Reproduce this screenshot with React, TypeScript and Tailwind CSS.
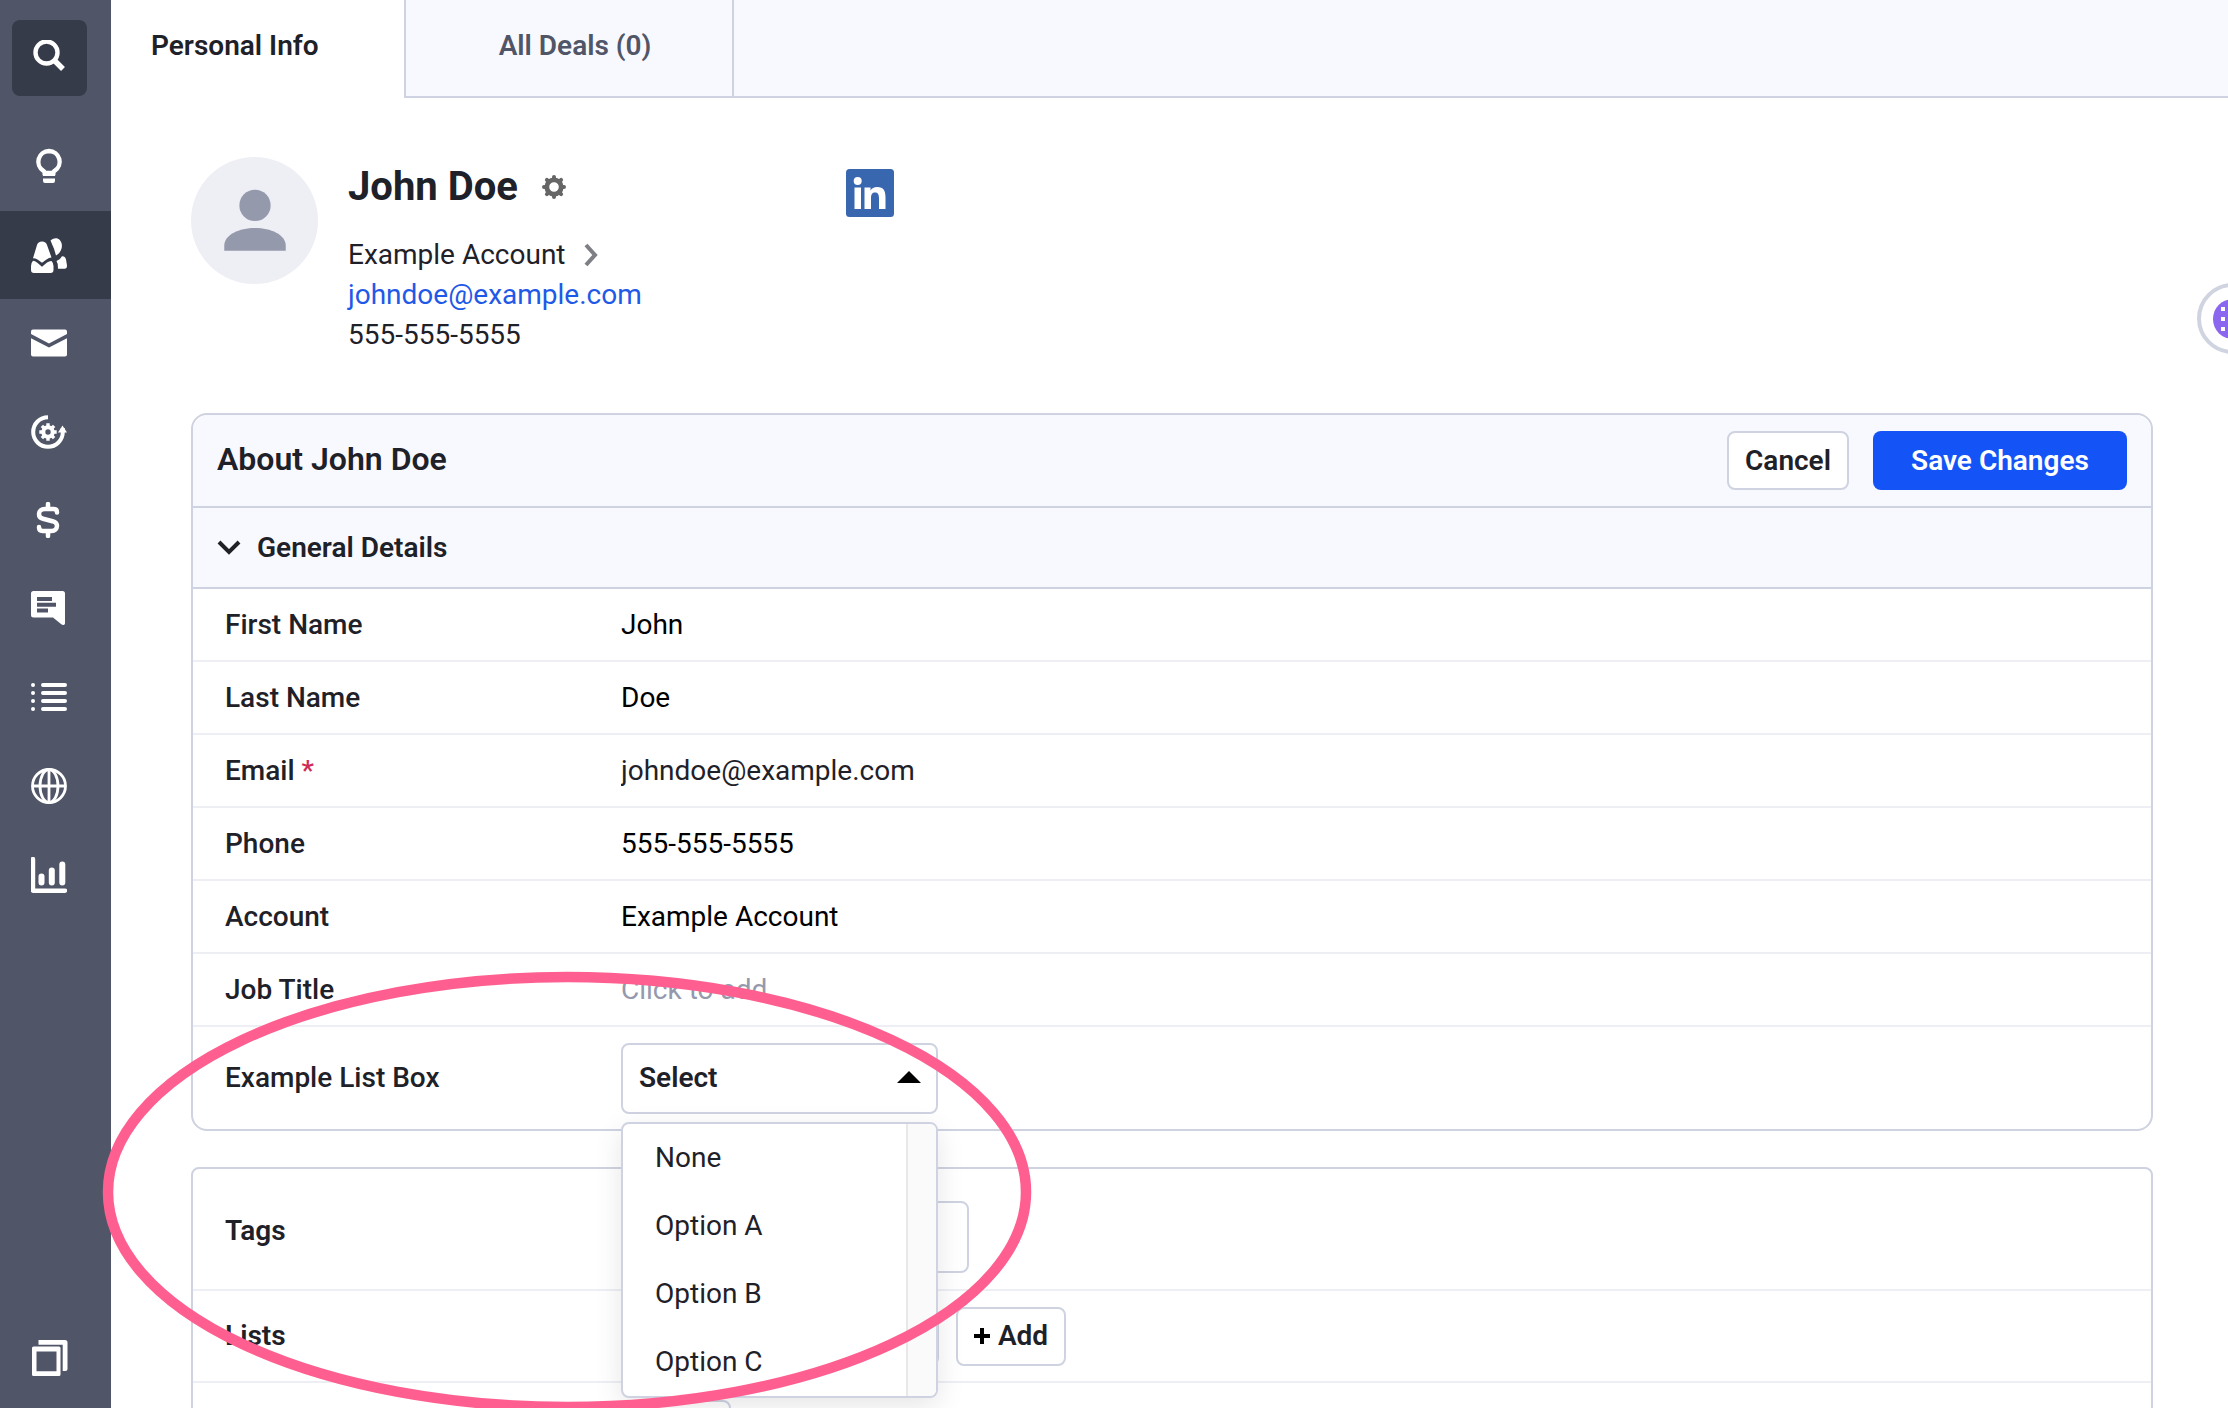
import { useState, type ReactNode } from "react";
import { clsx } from "clsx";

type Field = {
  id: string;
  label: string;
  value: string;
  required?: boolean;
  readOnly?: boolean;
};

const FIELDS: Field[] = [
  { id: "first-name", label: "First Name", value: "John" },
  { id: "last-name", label: "Last Name", value: "Doe" },
  { id: "email", label: "Email", value: "johndoe@example.com", required: true, readOnly: true },
  { id: "phone", label: "Phone", value: "555-555-5555" },
  { id: "account", label: "Account", value: "Example Account" },
  { id: "job-title", label: "Job Title", value: "" },
];

const OPTIONS = ["None", "Option A", "Option B", "Option C"];

/** Sidebar icons share a 36x36 box. */
function Icon({ children }: { children: ReactNode }) {
  return (
    <svg viewBox="0 0 36 36" className="size-9" fill="currentColor" aria-hidden="true">
      {children}
    </svg>
  );
}

const NAV: { label: string; active?: boolean; icon: ReactNode }[] = [
  {
    label: "Opportunities",
    icon: (
      <>
        <path
          d="M18 3a10.7 10.7 0 0 0-5.6 19.8c.8.6 1.3 1.2 1.3 2.2h8.6c0-1 .5-1.6 1.3-2.2A10.7 10.7 0 0 0 18 3Z"
          fill="none"
          stroke="currentColor"
          strokeWidth="4.4"
        />
        <path d="M12 24h12v4H12zM12 30.5h12v2.5a2 2 0 0 1-2 2h-8a2 2 0 0 1-2-2z" />
      </>
    ),
  },
  {
    label: "People",
    active: true,
    icon: (
      <>
        <path d="M6 8Q7 4.500 11 4.500T16 8L20.500 20.500Q18 20.700 15.500 22.500L11 25.800 6.500 22.500Q4.500 21.300 2 21.300Z" />
        <path d="M2 23.800Q4 24 6 25.500L11 29.700 16 25.500Q18.500 23.800 20.500 24 22.500 26 22.500 29V33Q22.500 36 19.500 36H3Q0 36 0 33V29Q0 26 2 23.800Z" />
        <path d="M19.500 3.500C23 .5 26.500.5 28.800 3 32.500 7 31.500 15 25 18.500Q23.500 12 19.500 3.500Z" />
        <path d="M25.500 24Q29.500 22.500 31 19.300 34 19 35 22.500L36 28.500Q36 31.800 33.500 31.800H27Q27.500 27 25.500 24Z" />
      </>
    ),
  },
  {
    label: "Mail",
    icon: (
      <>
        <path d="M2 4.500h32a2 2 0 0 1 2 2V9L18 18.500 0 9V6.500a2 2 0 0 1 2-2Z" />
        <path d="M0 13.300 18 22.500l18-9.200v16.200a2 2 0 0 1-2 2H2a2 2 0 0 1-2-2Z" />
      </>
    ),
  },
  {
    label: "Automations",
    icon: (
      <>
        <path d="M17 3.200A14.800 14.800 0 1 0 31.800 18v-4" fill="none" stroke="currentColor" strokeWidth="4" />
        <path d="M31.500 11.500 36 18.500h-9z" />
        <circle cx="17" cy="18" r="4.700" fill="none" stroke="currentColor" strokeWidth="4" />
        <g stroke="currentColor" strokeWidth="3.400">
          <path d="M17 9.300v3M17 23.700v3M8.300 18h3M22.700 18h3M10.900 11.900l2.100 2.100M21 22l2.100 2.100M10.900 24.100 13 22M21 14l2.100-2.100" />
        </g>
      </>
    ),
  },
  {
    label: "Deals",
    icon: (
      <path
        d="M17 2v5M17 29v5M26 10.500C26 8 24.500 7 22.500 7h-9C10.500 7 8 9.200 8 12c0 3 2 4.300 4 4.800l9.500 2.400c2.500.7 4.500 2 4.500 4.600 0 3-2.300 5.200-5.500 5.200h-9C9 29 8 27.500 8 25"
        fill="none"
        stroke="currentColor"
        strokeWidth="4.500"
        strokeLinecap="round"
      />
    ),
  },
  {
    label: "Conversations",
    icon: (
      <path
        fillRule="evenodd"
        d="M2.500 0h29A2.500 2.500 0 0 1 34 2.500V32c0 2.200-2 2.700-3.700 1.300L22 26.500H2.500A2.500 2.500 0 0 1 0 24V2.500A2.500 2.500 0 0 1 2.500 0ZM6 6v4h15V6ZM6 11.800v4h19v-4ZM6 17.500v4h11v-4Z"
      />
    ),
  },
  {
    label: "Lists",
    icon: (
      <g stroke="currentColor" strokeWidth="4" strokeLinecap="round">
        <path d="M2 5h.01M2 13h.01M2 21h.01M2 29h.01M12 5h22M12 13h22M12 21h22M12 29h22" />
      </g>
    ),
  },
  {
    label: "Website",
    icon: (
      <g fill="none" stroke="currentColor" strokeWidth="2.800">
        <circle cx="18" cy="18" r="16.500" />
        <ellipse cx="18" cy="18" rx="9" ry="16.500" />
        <path d="M18 1.500v33M1.500 18h33" />
      </g>
    ),
  },
  {
    label: "Reports",
    icon: (
      <>
        <path
          d="M2 2v31.700h32"
          fill="none"
          stroke="currentColor"
          strokeWidth="4.400"
          strokeLinecap="round"
          strokeLinejoin="round"
        />
        <path
          d="M10.500 19.500v6M20.800 13.500v12M31.300 7.500v18"
          fill="none"
          stroke="currentColor"
          strokeWidth="6"
          strokeLinecap="round"
        />
      </>
    ),
  },
];

function Sidebar() {
  return (
    <aside className="flex w-[111px] shrink-0 flex-col bg-[#505668] text-white">
      <button
        type="button"
        aria-label="Search"
        className="mt-5 ml-3 flex h-[76px] w-[75px] items-center justify-center rounded-lg bg-[#363b49]"
      >
        <Icon>
          <circle cx="14.500" cy="12.500" r="11" fill="none" stroke="currentColor" strokeWidth="4.400" />
          <path d="m22 20 9 9" stroke="currentColor" strokeWidth="5.400" />
        </Icon>
      </button>
      <nav className="mt-[26px] grid h-[797px] grid-rows-9">
        {NAV.map((n) => (
          <a
            key={n.label}
            href="#"
            aria-label={n.label}
            className={clsx("flex items-center pl-[31px]", n.active && "bg-[#363b49]")}
          >
            <Icon>{n.icon}</Icon>
          </a>
        ))}
      </nav>
      <button type="button" aria-label="Switch app" className="mt-auto mb-8 ml-8 self-start">
        <Icon>
          <path d="M6.500 0H33a2.500 2.500 0 0 1 2.500 2.500V29a2 2 0 0 1-2 2h-2.800V4.700H6.500Z" />
          <path
            fillRule="evenodd"
            d="M1.500 6.500H27A1.500 1.500 0 0 1 28.500 8v26.500A1.500 1.500 0 0 1 27 36H1.500A1.500 1.500 0 0 1 0 34.500V8a1.500 1.500 0 0 1 1.500-1.500ZM4.500 11.500v19.700h20V11.500Z"
          />
        </Icon>
      </button>
    </aside>
  );
}

function Tabs() {
  return (
    <nav className="flex h-[98px] bg-[#f8f9fe] font-semibold leading-10">
      <a href="#personal" aria-current="page" className="w-[293px] bg-white pt-[26px] pl-10">
        Personal Info
      </a>
      <a
        href="#deals"
        className="w-[330px] border-x-2 border-b-2 border-[#cfd3e1] pt-[26px] pl-3 text-center text-[#505668]"
      >
        All Deals (0)
      </a>
      <div className="flex-1 border-b-2 border-[#cfd3e1]" />
    </nav>
  );
}

function ContactHeader() {
  return (
    <header className="flex items-start pt-[59px]">
      <svg viewBox="0 0 126 126" className="size-[127px]" aria-hidden="true">
        <circle cx="63" cy="63" r="63" fill="#eeeff5" />
        <circle cx="63.500" cy="48" r="15.500" fill="#9499ac" />
        <path d="M33 93V88c0-11 15-17.500 30.500-17.500S94 77 94 88v5Z" fill="#9499ac" />
      </svg>
      <div className="ml-[30px] w-[498px] pt-0.5">
        <div className="flex h-14 items-center gap-6">
          <h1 className="text-[40px] font-bold">John Doe</h1>
          <button type="button" aria-label="Contact settings">
            <svg viewBox="0 0 24 24" className="size-6" fill="none" stroke="#666" aria-hidden="true">
              <circle cx="12" cy="12" r="7.200" strokeWidth="4.800" />
              <path
                d="M12 2v3M12 19v3M2 12h3M19 12h3M4.900 4.900 7 7M17 17l2.100 2.100M4.900 19.100 7 17M17 7l2.100-2.100"
                strokeWidth="4"
                strokeLinecap="round"
              />
            </svg>
          </button>
        </div>
        <div className="mt-5 leading-10">
          <a href="#account" className="flex items-center gap-[18px]">
            Example Account
            <svg viewBox="0 0 14 24" className="h-6 w-[14px]" aria-hidden="true">
              <path d="m2 2 9 10-9 10" fill="none" stroke="#7d7f85" strokeWidth="4" />
            </svg>
          </a>
          <a href="mailto:johndoe@example.com" className="block text-[#1f59e8]">
            johndoe@example.com
          </a>
          <p>555-555-5555</p>
        </div>
      </div>
      <a href="#linkedin" aria-label="LinkedIn" className="mt-3">
        <svg viewBox="0 0 48 48" className="size-12" aria-hidden="true">
          <rect width="48" height="48" rx="3.500" fill="#3867b0" />
          <g fill="#fff">
            <circle cx="11.700" cy="12" r="4" />
            <rect x="8.500" y="18.500" width="6.500" height="21.500" />
            <path d="M18.500 18.500h6v3c1.200-2.200 3.600-3.600 6.600-3.600 6.600 0 8.400 4.100 8.400 10V40H33V29.500c0-3.300-.6-6-4-6s-4 2.700-4 6V40h-6.500Z" />
          </g>
        </svg>
      </a>
    </header>
  );
}

function ListBox() {
  const [open, setOpen] = useState(true);
  const [value, setValue] = useState("");

  return (
    <div className="relative w-[317px]">
      <select
        id="list-box"
        value={value}
        onMouseDown={(e) => {
          e.preventDefault();
          setOpen((v) => !v);
        }}
        onChange={(e) => setValue(e.target.value)}
        className="h-[71px] w-full appearance-none rounded-lg border-2 border-[#cfd3e1] bg-white px-4 font-semibold"
      >
        <option value="">Select</option>
        {OPTIONS.map((o) => (
          <option key={o}>{o}</option>
        ))}
      </select>
      <svg
        viewBox="0 0 24 12"
        className="pointer-events-none absolute top-7 right-[17px] h-3 w-6"
        aria-hidden="true"
      >
        <path d="M12 0 24 12H0Z" fill="#000" />
      </svg>

      {open && (
        <div className="absolute top-[79px] left-0 z-10 flex w-full overflow-hidden rounded-lg border-2 border-[#cfd3e1] bg-white shadow-[0_8px_28px_rgba(0,0,0,0.1)]">
          <ul className="flex-1">
            {OPTIONS.map((o) => (
              <li key={o}>
                <button
                  type="button"
                  onClick={() => {
                    setValue(o);
                    setOpen(false);
                  }}
                  className="h-[68px] w-full pl-8 text-left"
                >
                  {o}
                </button>
              </li>
            ))}
          </ul>
          {/* scrollbar gutter */}
          <div className="w-[30px] border-l-2 border-[#e8e8e8] bg-[#fafafa]" />
        </div>
      )}
    </div>
  );
}

function AboutCard() {
  return (
    <form
      className="mt-[58px] rounded-2xl border-2 border-[#cfd3e1]"
      onSubmit={(e) => e.preventDefault()}
    >
      <div className="flex h-[93px] items-center rounded-t-2xl border-b-2 border-[#cfd3e1] bg-[#f8f9fe] px-6">
        <h2 className="flex-1 pb-1 text-[32px] font-semibold">About John Doe</h2>
        <button
          type="button"
          className="h-[59px] w-[122px] rounded-lg border-2 border-[#cfd3e1] bg-white font-semibold"
        >
          Cancel
        </button>
        <button
          type="submit"
          className="ml-6 h-[59px] w-[254px] rounded-lg bg-[#1453f5] font-semibold text-white"
        >
          Save Changes
        </button>
      </div>
      <button
        type="button"
        aria-expanded="true"
        className="flex h-[81px] w-full items-center gap-4 border-b-2 border-[#cfd3e1] bg-[#f8f9fe] pl-6 font-semibold"
      >
        <svg viewBox="0 0 24 16" className="h-4 w-6" aria-hidden="true">
          <path d="m2 2 10 10L22 2" fill="none" stroke="#1f2129" strokeWidth="4" />
        </svg>
        General Details
      </button>
      {FIELDS.map((f) => (
        <div key={f.id} className="flex h-[73px] items-center border-b-2 border-[#eeeff5] pl-8">
          <label htmlFor={f.id} className="w-[396px] font-medium">
            {f.label}
            {f.required && <span className="text-[#d02b55]"> *</span>}
          </label>
          <input
            id={f.id}
            defaultValue={f.value}
            readOnly={f.readOnly}
            placeholder="Click to add"
            className={clsx(
              "min-w-0 flex-1 bg-transparent outline-none placeholder:text-[#9499ac]",
              f.readOnly ? "text-[#1f2129]" : "text-black",
            )}
          />
        </div>
      ))}
      <div className="flex h-[102px] items-center pl-8">
        <label htmlFor="list-box" className="w-[396px] font-medium">
          Example List Box
        </label>
        <ListBox />
      </div>
    </form>
  );
}

function TagsCard() {
  return (
    <section className="mt-9 rounded-lg border-2 border-[#cfd3e1]">
      <div className="flex h-[122px] items-center border-b-2 border-[#eeeff5] pl-8">
        <label htmlFor="tags" className="w-[396px] pt-1 font-semibold">
          Tags
        </label>
        <input
          id="tags"
          className="mt-4 h-[72px] w-[348px] rounded-lg border-2 border-[#cfd3e1] px-4 outline-none"
        />
      </div>
      <div className="flex h-[92px] items-center border-b-2 border-[#eeeff5] pl-8">
        <label htmlFor="lists" className="w-[396px] font-semibold">
          Lists
        </label>
        <input
          id="lists"
          className="h-[59px] w-[318px] rounded-lg border-2 border-[#cfd3e1] px-4 outline-none"
        />
        <button
          type="button"
          className="ml-[17px] flex h-[59px] w-[110px] items-center justify-center gap-2 rounded-lg border-2 border-[#cfd3e1] bg-white font-semibold"
        >
          <svg viewBox="0 0 16 16" className="size-4" aria-hidden="true">
            <path d="M8 0v16M0 8h16" stroke="#000" strokeWidth="4" />
          </svg>
          Add
        </button>
      </div>
      <div className="flex h-[92px] items-center pl-[428px]">
        <button
          type="button"
          aria-label="Add to automation"
          className="h-[59px] w-[110px] rounded-lg border-2 border-[#cfd3e1] bg-white"
        />
      </div>
    </section>
  );
}

export default function App() {
  return (
    <div className="relative flex h-screen overflow-hidden bg-white font-[Roboto,sans-serif] text-[28px] text-[#1f2129]">
      <Sidebar />
      <div className="min-w-0 flex-1">
        <Tabs />
        <main className="pr-[75px] pl-20">
          <ContactHeader />
          <AboutCard />
          <TagsCard />
        </main>
      </div>

      {/* floating helper, half tucked behind the window edge */}
      <button
        type="button"
        aria-label="Open helper"
        className="absolute top-[283px] -right-10 flex size-[71px] items-center justify-center rounded-full border-4 border-[#cfd4e0] bg-white"
      >
        <svg viewBox="0 0 40 40" className="size-10" aria-hidden="true">
          <circle cx="20" cy="20" r="20" fill="#8b66ee" />
          <path d="M8 8h4v4H8zM8 18h4v4H8zM8 28h4v4H8zM18 8h4v4h-4zM18 18h4v4h-4zM18 28h4v4h-4z" fill="#fff" />
        </svg>
      </button>

      {/* highlight ring around the list box */}
      <svg
        viewBox="0 0 930 442"
        className="pointer-events-none absolute top-[971px] left-[102px] z-20 h-[442px] w-[930px]"
        aria-hidden="true"
      >
        <ellipse cx="465" cy="221" rx="459" ry="215" fill="none" stroke="#ff5f90" strokeWidth="10.500" />
      </svg>
    </div>
  );
}
